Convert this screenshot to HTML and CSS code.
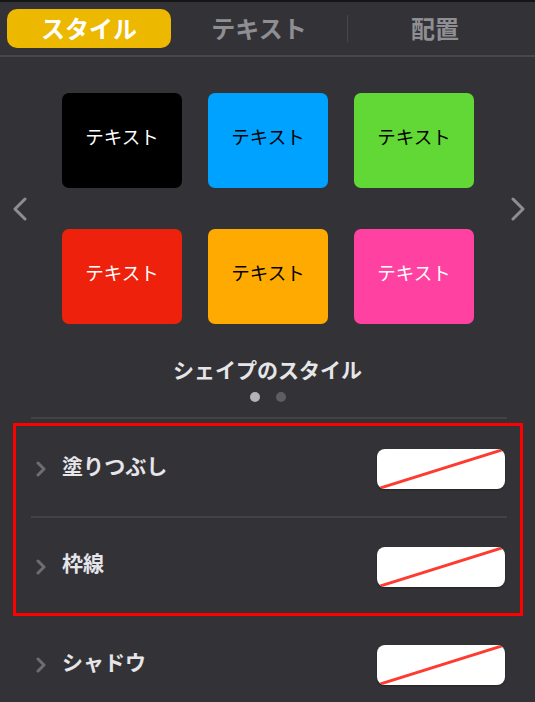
FILE: index.html
```html
<!DOCTYPE html>
<html lang="ja">
<head>
<meta charset="utf-8">
<link rel="stylesheet" href="styles.css">
</head>
<body>
<div class="topline"></div>
<div class="tabs">
  <div class="tab active">スタイル</div>
  <div class="tab">テキスト</div>
  <div class="tab-divider"></div>
  <div class="tab">配置</div>
</div>

<div class="gallery">
  <div class="nav nav-left">
    <svg width="14" height="24" viewBox="0 0 14 24"><polyline points="12,2 2,12 12,22" fill="none" stroke="#8e8e91" stroke-width="3" stroke-linecap="round" stroke-linejoin="round"/></svg>
  </div>
  <div class="grid">
    <div class="card c-black">テキスト</div>
    <div class="card c-blue">テキスト</div>
    <div class="card c-green">テキスト</div>
    <div class="card c-red">テキスト</div>
    <div class="card c-orange">テキスト</div>
    <div class="card c-pink">テキスト</div>
  </div>
  <div class="nav nav-right">
    <svg width="14" height="24" viewBox="0 0 14 24"><polyline points="2,2 12,12 2,22" fill="none" stroke="#8e8e91" stroke-width="3" stroke-linecap="round" stroke-linejoin="round"/></svg>
  </div>
</div>

<div class="gallery-title">シェイプのスタイル</div>
<div class="dots"><span class="dot on"></span><span class="dot"></span></div>
<div class="sep sep-main"></div>

<div class="highlight">
  <div class="row row-in row1">
    <svg class="chev" width="10" height="16" viewBox="0 0 10 16"><polyline points="2,2 8,8 2,14" fill="none" stroke="#6e6e72" stroke-width="3" stroke-linecap="round" stroke-linejoin="round"/></svg>
    <span class="label">塗りつぶし</span>
    <div class="swatch"><svg width="128" height="40" viewBox="0 0 128 40"><line x1="0" y1="40" x2="128" y2="0" stroke="#ff3b30" stroke-width="3"/></svg></div>
  </div>
  <div class="sep sep-row"></div>
  <div class="row row-in row2">
    <svg class="chev" width="10" height="16" viewBox="0 0 10 16"><polyline points="2,2 8,8 2,14" fill="none" stroke="#6e6e72" stroke-width="3" stroke-linecap="round" stroke-linejoin="round"/></svg>
    <span class="label">枠線</span>
    <div class="swatch"><svg width="128" height="40" viewBox="0 0 128 40"><line x1="0" y1="40" x2="128" y2="0" stroke="#ff3b30" stroke-width="3"/></svg></div>
  </div>
</div>

<div class="row row-out">
  <svg class="chev" width="10" height="16" viewBox="0 0 10 16"><polyline points="2,2 8,8 2,14" fill="none" stroke="#6e6e72" stroke-width="3" stroke-linecap="round" stroke-linejoin="round"/></svg>
  <span class="label">シャドウ</span>
  <div class="swatch"><svg width="128" height="40" viewBox="0 0 128 40"><line x1="0" y1="40" x2="128" y2="0" stroke="#ff3b30" stroke-width="3"/></svg></div>
</div>
</body>
</html>
```

FILE: styles.css
```css
* { box-sizing: border-box; }
html, body { margin: 0; padding: 0; }
body {
  width: 535px;
  height: 702px;
  overflow: hidden;
  background: #333337;
  font-family: "Noto Sans CJK JP", "Noto Sans", sans-serif;
  color: #e5e5ea;
}
.topline { height: 2px; background: #151517; }
.tabs {
  display: grid;
  grid-template-columns: 164px 176px 1px 174px;
  align-items: center;
  padding: 7px 0 7px 7px;
  border-bottom: 2px solid #48484c;
}
.tab {
  height: 39px;
  display: flex;
  align-items: center;
  justify-content: center;
  padding-bottom: 2px;
  font-size: 24px;
  font-weight: 700;
  color: #8e8e93;
}
.tab.active {
  background: #edb800;
  border-radius: 10px;
  color: #ffffff;
}
.tab-divider { height: 27px; background: #48484c; }

.gallery {
  display: flex;
  align-items: center;
  padding-top: 36px;
}
.nav { flex: none; display: flex; }
.nav-left { width: 62px; padding-left: 13px; }
.nav-right { padding-left: 37px; }
.grid {
  flex: none;
  display: grid;
  grid-template-columns: repeat(3, 120px);
  grid-auto-rows: 95px;
  column-gap: 26px;
  row-gap: 41px;
}
.card {
  border-radius: 7px;
  display: flex;
  align-items: center;
  justify-content: center;
  padding-bottom: 10px;
  font-size: 18.5px;
}
.c-black { background: #000000; color: #ffffff; }
.c-blue { background: #00a2ff; color: #000000; }
.c-green { background: #61d836; color: #000000; }
.c-red { background: #ee220c; color: #ffffff; }
.c-orange { background: #ffaa00; color: #000000; }
.c-pink { background: #ff42a1; color: #ffffff; }

.gallery-title {
  margin-top: 31px;
  height: 28px;
  line-height: 28px;
  text-align: center;
  font-size: 21px;
  font-weight: 700;
  color: #e6e6e8;
}
.dots {
  margin-top: 9px;
  display: flex;
  justify-content: center;
  gap: 16px;
  height: 10px;
}
.dot { width: 10px; height: 10px; border-radius: 50%; background: #5e5e62; }
.dot.on { background: #b4b4b6; }
.sep { height: 2px; background: #434347; }
.sep-main { margin: 15px 28px 0 31px; }

.highlight {
  margin: 4px 0 0 13px;
  width: 510px;
  border: 3px solid #ff0000;
}
.row {
  display: flex;
  align-items: center;
}
.row-in { padding: 0 15px 0 20px; }
.row1 { height: 90px; padding-bottom: 4px; }
.row2 { height: 95px; padding-top: 3px; }
.row2 .label { padding-bottom: 11px; }
.sep-row { margin: 0 13px 0 15px; }
.row-out { height: 100px; padding: 0 30px 2px 36px; }
.chev { flex: none; }
.label {
  margin-left: 16px;
  flex: 1;
  padding-bottom: 8px;
  font-size: 21px;
  font-weight: 700;
  color: #e5e5ea;
}
.swatch {
  width: 128px;
  height: 40px;
  background: #ffffff;
  border-radius: 8px;
  overflow: hidden;
  box-shadow: 0 1px 2px rgba(0,0,0,0.35);
}
.swatch svg { display: block; }
```
